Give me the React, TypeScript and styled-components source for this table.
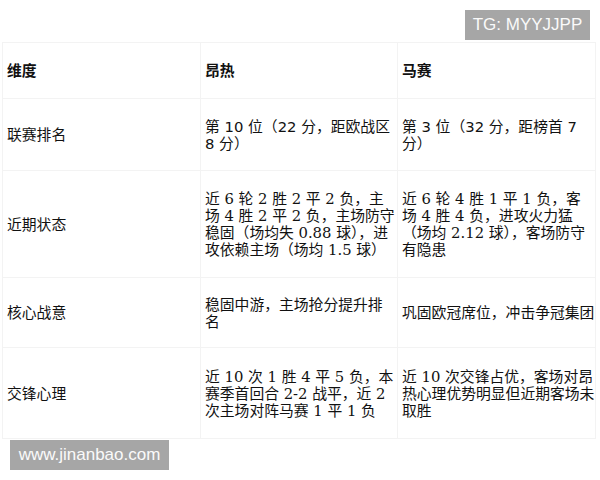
import React from "react";
import styled, { createGlobalStyle } from "styled-components";

type Row = {
  label: string;
  angers: string;
  marseille: string;
  height: number;
  serifDigits?: boolean;
};

const GlobalStyle = createGlobalStyle`
  html, body {
    margin: 0;
    padding: 0;
    background: #ffffff;
  }
  body {
    width: 600px;
    height: 480px;
    overflow: hidden;
    font-family: "Noto Sans CJK SC", sans-serif;
  }
`;

const Page = styled("div")`
  position: relative;
  width: 600px;
  height: 480px;
  padding-top: 42px;
  padding-left: 2px;
  box-sizing: border-box;
`;

const Table = styled("table")`
  width: 593px;
  border-collapse: collapse;
  table-layout: fixed;
  border: 1px solid #f3f3f3;
`;

const TableRow = styled("tr")<{ h: number }>`
  height: ${(props) => props.h}px;
`;

const Cell = styled("td")<{ serifDigits?: boolean; head?: boolean }>`
  border: 1px solid #f3f3f3;
  padding: 0 0 0 4px;
  vertical-align: middle;
  font-size: 14.8px;
  line-height: 17px;
  color: #111111;
  font-weight: ${(props) => (props.head ? 700 : 400)};
  font-family: ${(props) =>
    props.serifDigits
      ? `"DejaVu Serif", "Noto Sans CJK SC", serif`
      : `"DejaVu Sans", "Noto Sans CJK SC", sans-serif`};
  word-break: break-all;
`;

const Watermark = styled("div")`
  position: absolute;
  background: #a6a6a6;
  color: #fafafa;
  font-family: "Liberation Sans", Arial, sans-serif;
  font-size: 17px;
  line-height: 30px;
  height: 30px;
  text-align: center;
  white-space: nowrap;
`;

const TopMark = styled(Watermark)`
  top: 10px;
  left: 465px;
  width: 125px;
`;

const BottomMark = styled(Watermark)`
  top: 440px;
  left: 10px;
  width: 159px;
`;

const rows: Row[] = [
  {
    label: "联赛排名",
    angers: "第 10 位（22 分，距欧战区 8 分）",
    marseille: "第 3 位（32 分，距榜首 7 分）",
    height: 72,
  },
  {
    label: "近期状态",
    angers:
      "近 6 轮 2 胜 2 平 2 负，主场 4 胜 2 平 2 负，主场防守稳固（场均失 0.88 球），进攻依赖主场（场均 1.5 球）",
    marseille:
      "近 6 轮 4 胜 1 平 1 负，客场 4 胜 4 负，进攻火力猛（场均 2.12 球），客场防守有隐患",
    height: 107,
    serifDigits: true,
  },
  {
    label: "核心战意",
    angers: "稳固中游，主场抢分提升排名",
    marseille: "巩固欧冠席位，冲击争冠集团",
    height: 70,
  },
  {
    label: "交锋心理",
    angers:
      "近 10 次 1 胜 4 平 5 负，本赛季首回合 2-2 战平，近 2 次主场对阵马赛 1 平 1 负",
    marseille: "近 10 次交锋占优，客场对昂热心理优势明显但近期客场未取胜",
    height: 91,
    serifDigits: true,
  },
];

export default function App() {
  return (
    <Page>
      <GlobalStyle />
      <Table>
        <colgroup>
          <col style={{ width: 198 }} />
          <col style={{ width: 197 }} />
          <col style={{ width: 198 }} />
        </colgroup>
        <tbody>
          <TableRow h={56}>
            <Cell head>维度</Cell>
            <Cell head>昂热</Cell>
            <Cell head>马赛</Cell>
          </TableRow>
          {rows.map((row) => (
            <TableRow h={row.height} key={row.label}>
              <Cell>{row.label}</Cell>
              <Cell serifDigits={row.serifDigits}>{row.angers}</Cell>
              <Cell serifDigits={row.serifDigits}>{row.marseille}</Cell>
            </TableRow>
          ))}
        </tbody>
      </Table>
      <TopMark>TG: MYYJJPP</TopMark>
      <BottomMark>www.jinanbao.com</BottomMark>
    </Page>
  );
}
